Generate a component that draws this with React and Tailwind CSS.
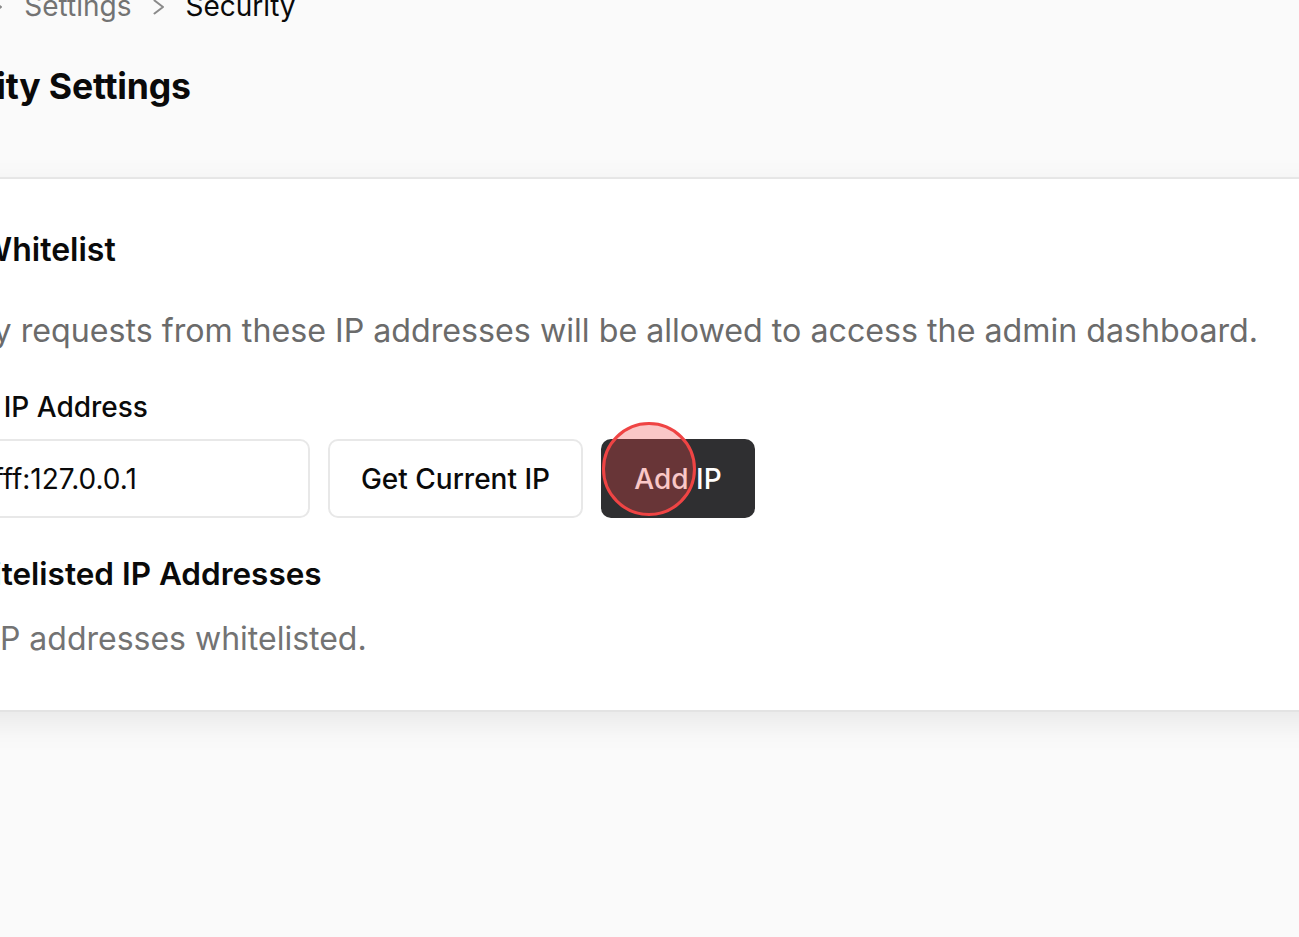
const Chevron = () => (
  <svg width="12" height="16" viewBox="0 0 12 16" fill="none" className="text-[#8a8a8a]">
    <path d="M1.5 1.5 L10 8 L1.5 14.5" stroke="currentColor" strokeWidth="2" strokeLinecap="round" strokeLinejoin="round" />
  </svg>
);

const Crumb = ({ children, last }) => (
  <span className={last ? "text-[#0a0a0a]" : "text-[#737373]"}>{children}</span>
);

const App = () => {
  return (
    <div className="min-h-screen overflow-hidden bg-[#fafafa] font-['Inter',sans-serif] text-[#0a0a0a]">
      {/* page header */}
      <div className="flex h-[179px] flex-col border-b-2 border-[#ebebeb]">
        <div className="-ml-[98px] -mt-[13px]">
          <nav className="-ml-[16px] flex items-center gap-[21px] text-[28px] leading-[39px]">
            <Crumb>Admin</Crumb>
            <Chevron />
            <Crumb>Settings</Crumb>
            <Chevron />
            <Crumb last>Security</Crumb>
          </nav>
          <h1 className="-ml-[7px] mt-[40px] text-[35.6px] font-bold leading-[42px] tracking-[-0.2px]">
            Security Settings
          </h1>
        </div>
      </div>

      {/* whitelist card */}
      <div className="-ml-[100px] w-[1600px] border-b-2 border-[#e3e3e3] bg-white pb-[50px] pl-[42px] pt-[52px] shadow-[0_10px_30px_rgba(0,0,0,0.08)]">
        <h2 className="text-[32px] font-semibold leading-[37px]">IP Whitelist</h2>
        <p className="mt-[41px] text-[32.2px] leading-[43px] text-[#6b6b6b]">
          Only requests from these IP addresses will be allowed to access the admin dashboard.
        </p>

        <label className="mt-[38px] block text-[28px] font-medium leading-[35px]">Add IP Address</label>
        <div className="mt-[14px] flex items-center gap-[18px]">
          <input
            className="h-[79px] w-[368px] rounded-[10px] border-2 border-[#e8e8e8] bg-white px-[24px] text-[28px] text-[#0a0a0a] outline-none"
            defaultValue="::ffff:127.0.0.1"
          />
          <button className="h-[79px] w-[255px] rounded-[10px] border-2 border-[#e8e8e8] bg-white text-[28px] font-medium">
            Get Current IP
          </button>
          <button className="relative h-[79px] w-[154px] rounded-[10px] bg-[#2f2f31] text-[28px] font-medium text-white">
            Add IP
            {/* click indicator */}
            <span className="absolute left-[1px] top-[-17px] h-[94px] w-[94px] rounded-full border-[3px] border-[#ef4444] bg-[rgba(239,68,68,0.3)]" />
          </button>
        </div>

        <h3 className="mt-[37px] text-[31.5px] font-semibold leading-[37px]">Whitelisted IP Addresses</h3>
        <p className="-ml-[3px] mt-[26px] text-[32px] leading-[42px] text-[#737373]">No IP addresses whitelisted.</p>
      </div>
    </div>
  );
};

export default App;
